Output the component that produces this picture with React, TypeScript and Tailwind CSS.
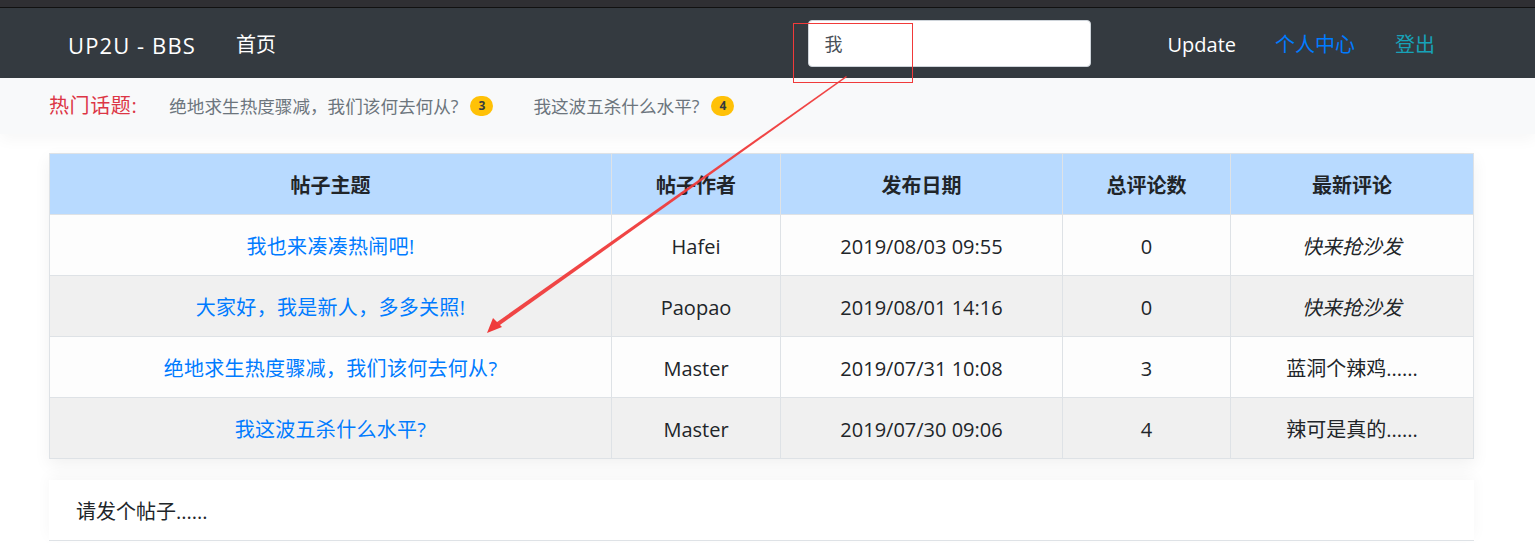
import React from 'react';

const posts = [
  { title: '我也来凑凑热闹吧!', author: 'Hafei', date: '2019/08/03 09:55', count: 0, latest: '快来抢沙发', empty: true },
  { title: '大家好，我是新人，多多关照!', author: 'Paopao', date: '2019/08/01 14:16', count: 0, latest: '快来抢沙发', empty: true },
  { title: '绝地求生热度骤减，我们该何去何从?', author: 'Master', date: '2019/07/31 10:08', count: 3, latest: '蓝洞个辣鸡......', empty: false },
  { title: '我这波五杀什么水平?', author: 'Master', date: '2019/07/30 09:06', count: 4, latest: '辣可是真的......', empty: false },
];

const hotTopics = [
  { title: '绝地求生热度骤减，我们该何去何从?', count: 3 },
  { title: '我这波五杀什么水平?', count: 4 },
];

export default function App() {
  return (
    <div className="relative min-h-screen bg-white font-['Open_Sans','Noto_Sans_CJK_SC',sans-serif] text-[#212529] overflow-hidden">
      {/* window strip above the page */}
      <div className="h-[8px] bg-[#2f2f33] border-b border-[#111]" />

      <nav className="h-[70px] bg-[#343a40] flex items-center pl-[68px] pr-[100px] text-[20px]">
        <span className="text-white text-[22px] tracking-[1.1px] mr-[40px] pt-[4px]">UP2U - BBS</span>
        <a className="text-white pt-[4px]">首页</a>
        <div className="ml-auto flex items-center">
          <div className="w-[283px] h-[47px] bg-white rounded-[4px] border border-[#ced4da] flex items-center pl-[15px] pt-[2px] text-[18px] text-[#495057] mr-[76px]">
            我
          </div>
          <a className="text-white pt-[4px]">Update</a>
          <a className="text-[#007bff] ml-[39px] pt-[4px]">个人中心</a>
          <a className="text-[#17a2b8] ml-[40px] pt-[4px]">登出</a>
        </div>
      </nav>

      <div className="h-[56px] bg-[#f8f9fa] flex items-center pl-[49px] shadow-[0_6px_14px_rgba(0,0,0,0.035)]">
        <span className="text-[#dc3545] text-[20px] tracking-[0.6px] mr-[32px]">热门话题:</span>
        {hotTopics.map((t) => (
          <span key={t.title} className="flex items-center text-[17.6px] text-[#6c757d] mr-[40px]">
            {t.title}
            <span className="ml-[12px] h-[20px] min-w-[23px] px-[7px] rounded-full bg-[#ffc107] text-[#343a40] text-[12px] font-bold flex items-center justify-center">
              {t.count}
            </span>
          </span>
        ))}
      </div>

      <div className="ml-[49px] w-[1425px] mt-[19px]">
        <table className="w-full border-collapse border border-[#dee2e6] shadow-[0_6px_16px_rgba(0,0,0,0.06)] text-[20px] text-center">
          <thead>
            <tr className="bg-[#b8daff] h-[61px]">
              <th className="w-[562px] border border-[#dee2e6] font-bold pt-[4px]">帖子主题</th>
              <th className="w-[169px] border border-[#dee2e6] font-bold pt-[4px]">帖子作者</th>
              <th className="w-[282px] border border-[#dee2e6] font-bold pt-[4px]">发布日期</th>
              <th className="w-[168px] border border-[#dee2e6] font-bold pt-[4px]">总评论数</th>
              <th className="border border-[#dee2e6] font-bold pt-[4px]">最新评论</th>
            </tr>
          </thead>
          <tbody>
            {posts.map((p, i) => (
              <tr key={p.title} className={`h-[61px] ${i % 2 === 0 ? 'bg-[#fdfdfd]' : 'bg-[#f0f0f0]'}`}>
                <td className="border border-[#dee2e6] text-[#007bff] pt-[3px] tracking-[0.3px]">{p.title}</td>
                <td className="border border-[#dee2e6] pt-[3px]">{p.author}</td>
                <td className="border border-[#dee2e6] pt-[3px]">{p.date}</td>
                <td className="border border-[#dee2e6] pt-[3px]">{p.count}</td>
                <td className={`border border-[#dee2e6] pt-[3px] ${p.empty ? 'italic' : ''}`}>{p.latest}</td>
              </tr>
            ))}
          </tbody>
        </table>

        <div className="mt-[21px] h-[61px] bg-white border-b border-[#dee2e6] shadow-[0_-4px_14px_rgba(0,0,0,0.04)] flex items-center pl-[27px] pt-[4px] text-[20px]">
          请发个帖子......
        </div>
      </div>

      {/* screenshot annotation: red box and arrow */}
      <div className="absolute left-[793px] top-[23px] w-[120px] h-[60px] border border-[#f03a3a] pointer-events-none" />
      <svg className="absolute inset-0 pointer-events-none" width="1535" height="543" viewBox="0 0 1535 543">
        <polygon points="846,76 847,77 493,330 490,327" fill="#ef3b3b" opacity="0.95" />
        <polygon points="487,333 493,318 502,327" fill="#ef3b3b" />
      </svg>
    </div>
  );
}
